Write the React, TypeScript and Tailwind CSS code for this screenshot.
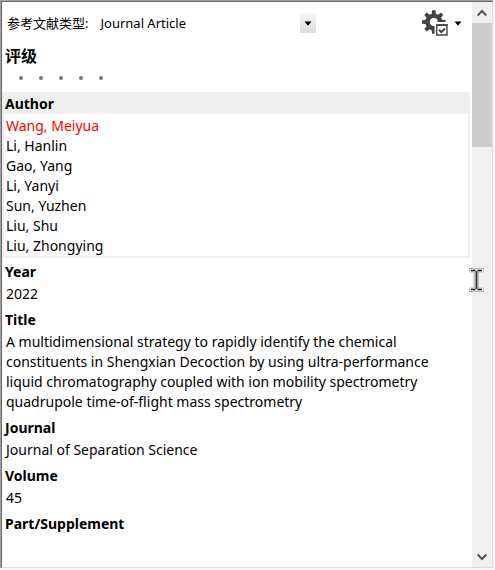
import React from 'react';

interface Field {
    label: string;
    value: string;
}

const authors = ['Wang, Meiyua', 'Li, Hanlin', 'Gao, Yang', 'Li, Yanyi', 'Sun, Yuzhen', 'Liu, Shu', 'Liu, Zhongying'];

const fields: Field[] = [
    { label: 'Year', value: '2022' },
    {
        label: 'Title',
        value: 'A multidimensional strategy to rapidly identify the chemical constituents in Shengxian Decoction by using ultra-performance liquid chromatography coupled with ion mobility spectrometry quadrupole time-of-flight mass spectrometry',
    },
    { label: 'Journal', value: 'Journal of Separation Science' },
    { label: 'Volume', value: '45' },
    { label: 'Part/Supplement', value: '' },
    { label: 'Issue', value: '' },
];

const teeth = [0, 45, 90, 135, 180, 225, 270, 315];

const DownArrow: React.FC = () => (
    <svg width="8" height="5" viewBox="0 0 8 5" fill="#000" aria-hidden="true">
        <path d="M0.5 0.5H7.5L4 4.8Z" />
    </svg>
);

const GearIcon: React.FC = () => (
    <svg width="26" height="26" viewBox="0 0 26 26" aria-hidden="true">
        <g fill="#444">
            {teeth.map(angle => (
                <path key={angle} d="M9.6 5L10.1 0.3H13.5L14 5Z" transform={`rotate(${angle} 11.8 12)`} />
            ))}
        </g>
        <circle cx="11.8" cy="12" r="6.3" fill="none" stroke="#444" strokeWidth="4.6" />
        <path d="M12.6 12H26V26H12.6Z" fill="#fff" />
        <path d="M15.5 11.8H23.4V10H17Z" fill="#444" />
        <path d="M14.7 15H25V25H14.7Z" fill="#fff" stroke="#444" strokeWidth="1.4" />
        <path d="M14 14.3H25.7V16H14Z" fill="#444" />
        <path d="M17 19.8L19.2 22L23 18.4" fill="none" stroke="#444" strokeWidth="2" />
    </svg>
);

const Toolbar: React.FC = () => (
    <div className="flex h-[42px] items-center pl-1 pr-2">
        <label htmlFor="ref-type" className="shrink-0 text-[13px]">参考文献类型:</label>
        <div className="relative ml-2 w-[220px]">
            <select id="ref-type" className="block h-5 w-full appearance-none bg-white pl-1 text-[13px] leading-5 outline-none">
                <option>Journal Article</option>
            </select>
            <span className="pointer-events-none absolute right-0 top-0 flex h-5 w-4 items-center justify-center bg-linear-to-b from-[#f8f8f8] to-[#dcdcdc]">
                <DownArrow />
            </span>
        </div>
        <button type="button" aria-label="Options" className="ml-auto flex items-center gap-1.5">
            <GearIcon />
            <DownArrow />
        </button>
    </div>
);

const Rating: React.FC = () => (
    <section className="pb-1">
        <h2 className="h-6 text-base font-bold leading-6">评级</h2>
        <div className="flex h-5 pl-1.5">
            {[1, 2, 3, 4, 5].map(n => (
                <button key={n} type="button" aria-label={`${n}`} className="flex w-5 items-center justify-center">
                    <span className="size-1 rounded-full bg-[#777]" />
                </button>
            ))}
        </div>
    </section>
);

const ScrollBar: React.FC = () => (
    <div className="flex w-5 shrink-0 flex-col bg-[#f0f0f0]">
        <button type="button" aria-label="Scroll up" className="flex h-[21px] items-center justify-center">
            <svg width="10" height="8" viewBox="0 0 10 8" fill="none" stroke="#555" strokeWidth="2">
                <path d="M0.7 6.5L5 2L9.3 6.5" />
            </svg>
        </button>
        <div className="h-[124px] bg-[#cdcdcd]" />
        <button type="button" aria-label="Scroll down" className="mt-auto flex h-5 items-center justify-center">
            <svg width="10" height="8" viewBox="0 0 10 8" fill="none" stroke="#555" strokeWidth="2">
                <path d="M0.7 1.5L5 6L9.3 1.5" />
            </svg>
        </button>
    </div>
);

const TextCursor: React.FC = () => (
    <svg className="pointer-events-none absolute right-2 top-[266px]" width="15" height="24" viewBox="0 0 15 24" aria-hidden="true">
        <path d="M0.5 0.5H14.5V4H9.5V20H14.5V23.5H0.5V20H5.5V4H0.5Z" fill="#fff" stroke="#bbb" />
        <path d="M2 2.5H6.5M8.5 2.5H13M2 21.5H6.5M8.5 21.5H13" stroke="#111" strokeWidth="1.6" />
        <path d="M7.5 3V21" stroke="#333" strokeWidth="2" />
    </svg>
);

export default function App() {
    return (
        <div className="h-screen bg-[#f7f7f7] pb-0.5 pr-0.5 font-['Noto_Sans','Noto_Sans_CJK_SC',sans-serif] text-black">
            <div className="h-full border-l border-t border-[#a0a0a0]">
                <div className="relative flex h-full overflow-hidden border border-b-[#ddd] border-l-[#696969] border-r-[#ddd] border-t-[#696969] bg-white">
                    <main className="min-w-0 flex-1 overflow-hidden pr-0.5 text-sm leading-5">
                        <div className="pl-px">
                            <Toolbar />
                        </div>
                        <div className="pl-[3px]">
                            <Rating />
                        </div>
                        <section className="border-2 border-t-0 border-[#efefef]">
                            <h2 className="h-[22px] bg-[#efefef] pl-px font-bold leading-6">Author</h2>
                            <ul className="pl-0.5 pt-0.5">
                                {authors.map((author, i) => (
                                    <li key={author} className={i === 0 ? 'text-[#f00]' : ''}>{author}</li>
                                ))}
                            </ul>
                        </section>
                        <dl className="pl-[3px] pr-8 pt-1">
                            {fields.map(({ label, value }) => (
                                <div key={label} className="pb-1.5">
                                    <dt className="h-[22px] font-bold">{label}</dt>
                                    <dd className="min-h-5 pl-px">{value}</dd>
                                </div>
                            ))}
                        </dl>
                    </main>
                    <ScrollBar />
                    <TextCursor />
                </div>
            </div>
        </div>
    );
}
